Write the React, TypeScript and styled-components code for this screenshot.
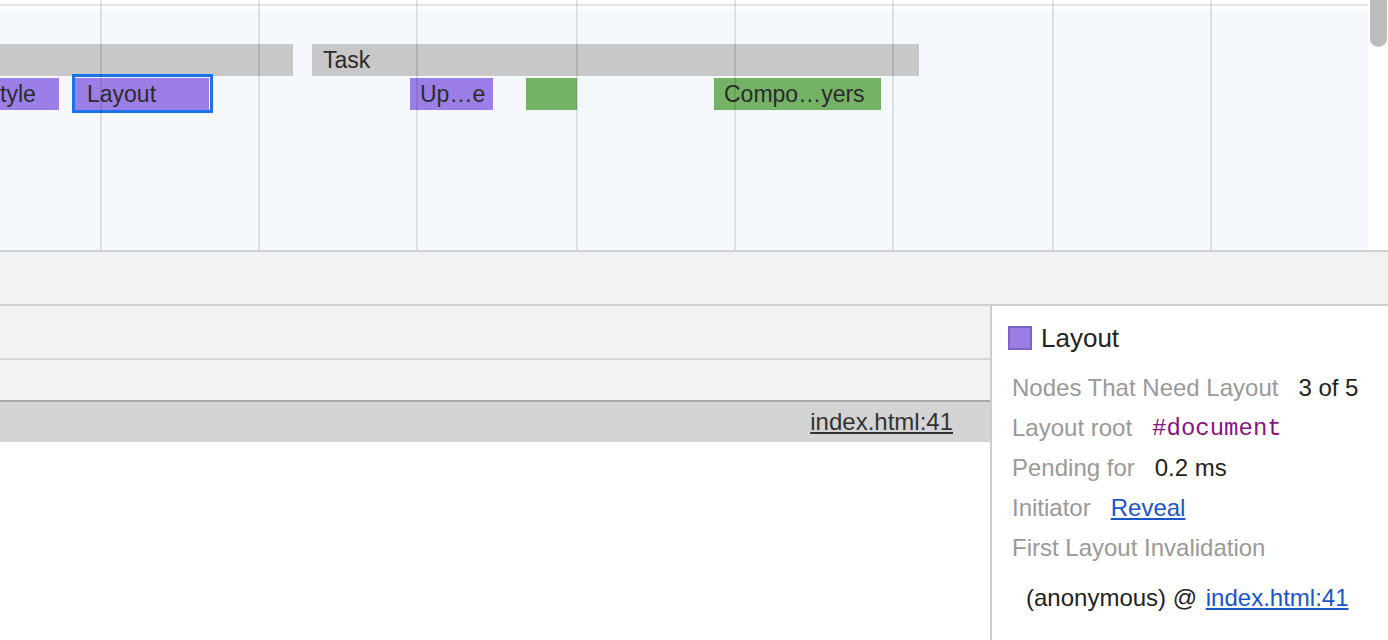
import { createGlobalStyle } from "styled-components"
import styled from "styled-components"

const GlobalStyle = createGlobalStyle`
  html, body {
    margin: 0;
    padding: 0;
    background: #ffffff;
    font-family: "Liberation Sans", Arial, sans-serif;
    color: #222;
  }
  * { box-sizing: border-box; }
`

const Page = styled.div`
  width: 1388px;
  height: 640px;
  display: flex;
  flex-direction: column;
  overflow: hidden;
  background: #fff;
`

const ChartRow = styled.div`
  display: flex;
  height: 250px;
  flex-shrink: 0;
`

// canvas area: white header strip with a thin rule, then the pale blue track
const Chart = styled.div`
  position: relative;
  flex: 1;
  overflow: hidden;
  background: linear-gradient(
    #fff 0 4px,
    #e6e6e6 4px 6px,
    #fff 6px 8px,
    #f5f8fd 10px
  );
`

const ScrollTrack = styled.div`
  width: 20px;
  background: #fff;
  display: flex;
  justify-content: center;
`

const ScrollThumb = styled.div`
  width: 17px;
  height: 47px;
  margin-left: 1px;
  background: #bcbcbc;
  border-radius: 0 0 9px 9px;
`

const Bar = styled.div<{ $color: string }>`
  position: absolute;
  height: 32px;
  background: ${p => p.$color};
  color: #2b2b2b;
  font-size: 23px;
  line-height: 33px;
  padding-left: 10px;
  white-space: nowrap;
  overflow: hidden;
`

const Selection = styled.div`
  position: absolute;
  border: 3px solid #1a73e8;
`

const GridLine = styled.div`
  position: absolute;
  top: 0;
  bottom: 0;
  width: 2px;
  background: rgba(0, 0, 0, 0.1);
  pointer-events: none;
`

const Band = styled.div`
  height: 56px;
  flex-shrink: 0;
  background: #f2f2f2;
  border-top: 2px solid #d0d0d0;
  border-bottom: 2px solid #d0d0d0;
`

const Bottom = styled.div`
  flex: 1;
  display: flex;
  min-height: 0;
`

const TreePane = styled.div`
  flex: 1;
  display: flex;
  flex-direction: column;
`

const TreeRow = styled.div<{ $h: number; $bg: string; $line?: string }>`
  height: ${p => p.$h}px;
  background: ${p => p.$bg};
  border-bottom: ${p => (p.$line ? `2px solid ${p.$line}` : "none")};
  display: flex;
  align-items: center;
  justify-content: flex-end;
  padding-right: 37px;
  font-size: 24px;
`

const SourceLink = styled.span`
  color: #333;
  text-decoration: underline;
`

const Details = styled.div`
  width: 398px;
  border-left: 2px solid #cdcdcd;
  padding: 20px 0 0 16px;
  display: flex;
  flex-direction: column;
`

const TitleRow = styled.div`
  display: flex;
  align-items: center;
  gap: 9px;
  height: 24px;
  margin-bottom: 18px;
  font-size: 26px;
  color: #222;
`

const Swatch = styled.span<{ $color: string }>`
  width: 24px;
  height: 24px;
  background: ${p => p.$color};
  border: 2px solid #7b63c9;
`

const Row = styled.div`
  display: flex;
  align-items: center;
  gap: 20px;
  height: 40px;
  padding-left: 4px;
  font-size: 24px;
  white-space: nowrap;
`

const Label = styled.span`
  color: #999;
`

const Value = styled.span<{ $mono?: boolean }>`
  color: ${p => (p.$mono ? "#881280" : "#222")};
  font-family: ${p => (p.$mono ? '"Liberation Mono", "DejaVu Sans Mono", monospace' : "inherit")};
`

const Link = styled.span`
  color: #1a55c9;
  text-decoration: underline;
`

const StackLine = styled.div`
  margin-top: 10px;
  padding-left: 18px;
  height: 40px;
  display: flex;
  align-items: center;
  gap: 2px;
  font-size: 24px;
  color: #222;
  white-space: pre;
`

const PURPLE = "#9b7fe6"
const GREEN = "#74b266"
const GRAY = "#c8c8c8"

const bars = [
  { left: 0, top: 44, width: 293, color: GRAY, text: "", pad: 0 },
  { left: 312, top: 44, width: 607, color: GRAY, text: "Task", pad: 11 },
  { left: 0, top: 78, width: 59, color: PURPLE, text: "tyle", pad: 0 },
  { left: 75, top: 78, width: 134, color: PURPLE, text: "Layout", pad: 12 },
  { left: 410, top: 78, width: 83, color: PURPLE, text: "Up…e", pad: 10 },
  { left: 526, top: 78, width: 51, color: GREEN, text: "", pad: 0 },
  { left: 714, top: 78, width: 167, color: GREEN, text: "Compo…yers", pad: 10 },
]

const gridLines = [100, 258, 416, 576, 734, 892, 1052, 1210]

export default function App() {
  return (
    <Page>
      <GlobalStyle />
      <ChartRow>
        <Chart>
          {bars.map((b, i) => (
            <Bar
              key={i}
              $color={b.color}
              style={{ left: b.left, top: b.top, width: b.width, paddingLeft: b.pad }}
            >
              {b.text}
            </Bar>
          ))}
          <Selection style={{ left: 72, top: 74, width: 141, height: 39 }} />
          {gridLines.map(x => (
            <GridLine key={x} style={{ left: x }} />
          ))}
        </Chart>
        <ScrollTrack>
          <ScrollThumb />
        </ScrollTrack>
      </ChartRow>
      <Band />
      <Bottom>
        <TreePane>
          <TreeRow $h={54} $bg="#f2f2f2" $line="#d6d6d6" />
          <TreeRow $h={42} $bg="#f2f2f2" $line="#a8a8a8" />
          <TreeRow $h={40} $bg="#d4d4d4">
            <SourceLink>index.html:41</SourceLink>
          </TreeRow>
        </TreePane>
        <Details>
          <TitleRow>
            <Swatch $color={PURPLE} />
            Layout
          </TitleRow>
          <Row>
            <Label>Nodes That Need Layout</Label>
            <Value>3 of 5</Value>
          </Row>
          <Row>
            <Label>Layout root</Label>
            <Value $mono>#document</Value>
          </Row>
          <Row>
            <Label>Pending for</Label>
            <Value>0.2 ms</Value>
          </Row>
          <Row>
            <Label>Initiator</Label>
            <Link>Reveal</Link>
          </Row>
          <Row>
            <Label>First Layout Invalidation</Label>
          </Row>
          <StackLine>
            <span>(anonymous) @ </span>
            <Link>index.html:41</Link>
          </StackLine>
        </Details>
      </Bottom>
    </Page>
  )
}
